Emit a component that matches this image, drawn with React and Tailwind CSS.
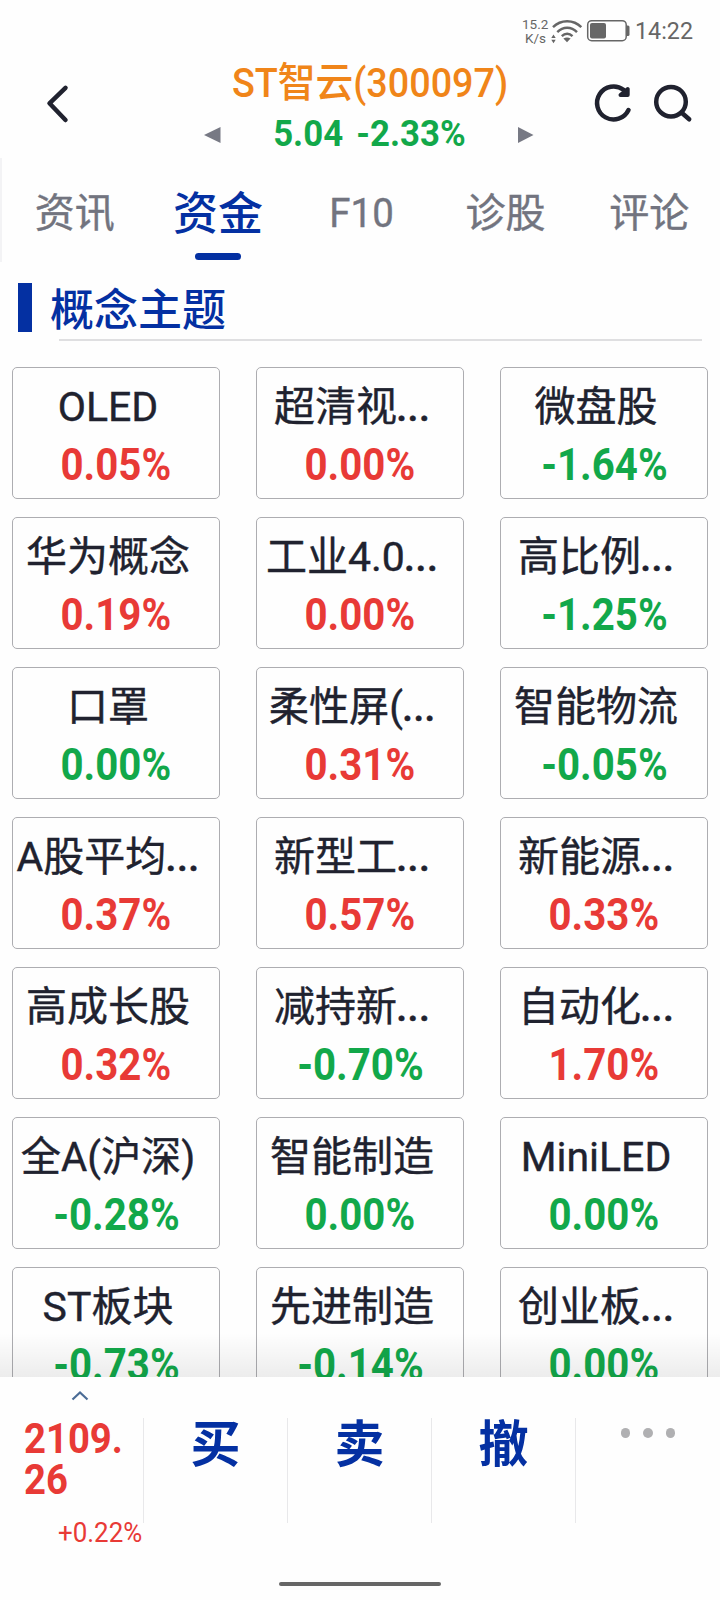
const CONCEPTS = [
  ['OLED', '0.05%', 'up'],
  ['超清视...', '0.00%', 'up'],
  ['微盘股', '-1.64%', 'down'],
  ['华为概念', '0.19%', 'up'],
  ['工业4.0...', '0.00%', 'up'],
  ['高比例...', '-1.25%', 'down'],
  ['口罩', '0.00%', 'down'],
  ['柔性屏(...', '0.31%', 'up'],
  ['智能物流', '-0.05%', 'down'],
  ['A股平均...', '0.37%', 'up'],
  ['新型工...', '0.57%', 'up'],
  ['新能源...', '0.33%', 'up'],
  ['高成长股', '0.32%', 'up'],
  ['减持新...', '-0.70%', 'down'],
  ['自动化...', '1.70%', 'up'],
  ['全A(沪深)', '-0.28%', 'down'],
  ['智能制造', '0.00%', 'down'],
  ['MiniLED', '0.00%', 'down'],
  ['ST板块', '-0.73%', 'down'],
  ['先进制造', '-0.14%', 'down'],
  ['创业板...', '0.00%', 'down'],
];

const TABS = ['资讯', '资金', 'F10', '诊股', '评论'];

function StatusBar() {
  return (
    <div className="flex h-[60px] shrink-0 items-start pl-[522px] text-[#666]">
      <div className="mt-[17px] w-[29px] text-[13.5px] leading-[14px]">
        <div>15.2</div>
        <div className="pl-[3px]">K/s</div>
      </div>
      <svg className="mt-[18px] h-[26px] w-[34px]" viewBox="0 0 34 26" fill="none" stroke="#666">
        <path d="M2 9.2C9.800 1.200 22.500 1.200 30.300 9.200M6.300 14.200C12 8.300 20.300 8.300 26 14.200M10.800 18.200C14 15 18.300 15 21.500 18.200" strokeWidth="2.4" />
        <path d="M12.400 20.500Q16 18.500 19.600 20.500L16 24.200Z" fill="#666" stroke="none" />
        <path d="M.3 20L2.500 16.500L4.700 20ZM.3 21.800L2.500 25.200L4.700 21.800Z" fill="#666" stroke="none" />
      </svg>
      <svg className="mt-[19px] ml-[1px] h-[24px] w-[46px]" viewBox="0 0 46 24">
        <rect x="1.700" y="1.700" width="38.500" height="20" rx="4" fill="none" stroke="#666" strokeWidth="1.500" />
        <rect x="4" y="4" width="16" height="15.500" rx="2" fill="#666" />
        <path d="M40.500 6.500h1.500q1.500 0 1.500 1.500v7.500q0 1.500-1.500 1.500h-1.500z" fill="#666" />
      </svg>
      <div className="mt-[18px] ml-[3px] origin-left scale-x-[0.97] text-[24px] leading-[26px]">14:22</div>
    </div>
  );
}

function Header() {
  return (
    <div className="flex h-[98px] shrink-0 items-start">
      <svg className="mt-[21px] ml-[42px] h-[44px] w-[32px]" viewBox="0 0 32 44" fill="none" stroke="#20222f" strokeWidth="4.500" strokeLinecap="round" strokeLinejoin="round">
        <path d="M23.500 6.800L7.500 22.300L23.500 39" />
      </svg>
      <div className="ml-[130px] flex w-[330px] flex-col">
        <div className="flex h-[44px] items-center justify-center pt-[2px] text-[#f08519]">
          <div className="ml-[2px] shrink-0 scale-x-[0.92] text-[41px] leading-[44px] font-medium whitespace-nowrap">ST智云(300097)</div>
        </div>
        <div className="flex h-[56px] items-center justify-between pt-[5px]">
          <svg className="h-[16px] w-[17px]" viewBox="0 0 17 16"><path d="M0 8L16.500 0V16Z" fill="#777984" /></svg>
          <div className="-ml-[1px] -mt-[2px] flex scale-x-[0.94] gap-[14px] text-[37px] leading-[44px] font-bold whitespace-nowrap text-[#12a84a]">
            <span>5.04</span>
            <span>-2.33%</span>
          </div>
          <svg className="h-[16px] w-[16px]" viewBox="0 0 16 16"><path d="M15.500 8L0 0V16Z" fill="#777984" /></svg>
        </div>
      </div>
      <svg className="mt-[20px] ml-[56px] h-[46px] w-[46px]" viewBox="0 0 46 46" fill="none" stroke="#20222f" strokeWidth="4.500" strokeLinecap="round" strokeLinejoin="round">
        <path d="M33.500 9.800A16.500 16.500 0 1 0 38.500 30" />
        <path d="M37.700 9V15H30.500Z" fill="#20222f" strokeWidth="4" />
      </svg>
      <svg className="mt-[20px] ml-[14px] h-[46px] w-[46px]" viewBox="0 0 46 46" fill="none" stroke="#20222f" strokeWidth="4.500" strokeLinecap="round">
        <circle cx="21" cy="21.700" r="14.800" />
        <path d="M32 33L39.200 39.300" />
      </svg>
    </div>
  );
}

function Tabs() {
  return (
    <div className="flex h-[104px] shrink-0 border-l-2 border-[#f3f3f5] text-[#72747f]">
      {TABS.map((tab) =>
        tab === '资金' ? (
          <div key={tab} className="flex w-[144px] flex-col items-center pl-[1px] text-[#0430a2]">
            <div className="flex h-[95px] items-center pt-[19px] text-[45px] font-medium">{tab}</div>
            <div className="h-[7px] w-[46px] rounded-full bg-[#0430a2]" />
          </div>
        ) : (
          <div key={tab} className="flex h-[95px] w-[144px] items-center justify-center pt-[17px] pl-[2px] text-[40px] [-webkit-text-stroke:0.4px_#72747f]">
            <span className={tab === 'F10' ? 'scale-x-[0.96]' : ''}>{tab}</span>
          </div>
        ),
      )}
    </div>
  );
}

function ConceptCard({ name, change, trend }) {
  return (
    <div className="flex h-[132px] flex-col items-center rounded-[5px] border border-[#adadb1] pt-[14px]">
      <div className={`mr-[16px] flex h-[52px] items-center text-[41px] whitespace-nowrap text-[#20222f] [-webkit-text-stroke:0.4px_#20222f] ${name.includes('(') ? 'scale-x-[0.98]' : ''}`}>
        {name.replace('...', '')}
        {name.endsWith('...') && <span className="-ml-[1px] font-medium">...</span>}
      </div>
      <div className={`flex h-[64px] scale-x-[0.925] items-center text-[43.5px] font-bold whitespace-nowrap ${trend === 'up' ? 'text-[#e83a36]' : 'text-[#12a84a]'}`}>
        {change}
      </div>
    </div>
  );
}

function TradeBar() {
  return (
    <div className="relative flex h-[223px] shrink-0 flex-col bg-[#fefefe]">
      <div className="absolute inset-x-0 -top-[44px] h-[44px] bg-linear-to-b from-black/0 to-black/7" />
      <div className="flex h-[41px] items-start">
        <svg className="mt-[12px] ml-[70px] h-[14px] w-[20px]" viewBox="0 0 20 14" fill="none" stroke="#4b6c96" strokeWidth="2.200">
          <path d="M2.500 10.500L10 3.500L17.500 10.500" />
        </svg>
      </div>
      <div className="flex h-[164px]">
        <div className="flex h-[105px] w-[144px] flex-col border-r border-[#e8e8ea] text-[#e83a36]">
          <div className="ml-[24px] h-[82px] w-[112px] shrink-0 origin-left scale-x-[0.89] text-[43px] leading-[41px] font-bold">
            <div>2109.</div>
            <div>26</div>
          </div>
          <div className="mt-[17px] ml-[58px] h-[32px] shrink-0 origin-left scale-x-[0.96] text-[27px] leading-[32px] whitespace-nowrap">+0.22%</div>
        </div>
        {['买', '卖', '撤'].map((action) => (
          <div key={action} className="flex h-[105px] w-[144px] justify-center border-r border-[#e8e8ea] text-[50px] leading-[54px] font-bold text-[#0430a2]">
            {action}
          </div>
        ))}
        <div className="flex flex-1 justify-center gap-[13px] pt-[10px]">
          <span className="size-[9.5px] rounded-full bg-[#b0b0b2]" />
          <span className="size-[9.5px] rounded-full bg-[#b0b0b2]" />
          <span className="size-[9.5px] rounded-full bg-[#b0b0b2]" />
        </div>
      </div>
      <div className="mx-auto h-[4px] w-[162px] rounded-full bg-[#666]" />
    </div>
  );
}

export default function App() {
  return (
    <div lang="zh-CN" className="flex h-[1600px] w-[720px] flex-col overflow-hidden bg-[#fefefe] font-[Roboto,'Noto_Sans_CJK_SC',sans-serif]">
      <StatusBar />
      <Header />
      <Tabs />
      <div className="flex h-[1115px] shrink-0 flex-col overflow-hidden">
        <div className="flex h-[77px] shrink-0 items-start pl-[18px]">
          <div className="mt-[21px] h-[49px] w-[14px] bg-[#0430a2]" />
          <div className="mt-[22px] ml-[18px] text-[44px] leading-[54px] font-medium text-[#0430a2]">概念主题</div>
        </div>
        <div className="mr-[18px] ml-[59px] h-[2px] shrink-0 bg-[#dfdfe1]" />
        <div className="mx-[12px] mt-[26px] grid shrink-0 grid-cols-[208px_208px_208px] gap-x-[36px] gap-y-[18px]">
          {CONCEPTS.map(([name, change, trend]) => (
            <ConceptCard key={name} name={name} change={change} trend={trend} />
          ))}
        </div>
      </div>
      <TradeBar />
    </div>
  );
}
